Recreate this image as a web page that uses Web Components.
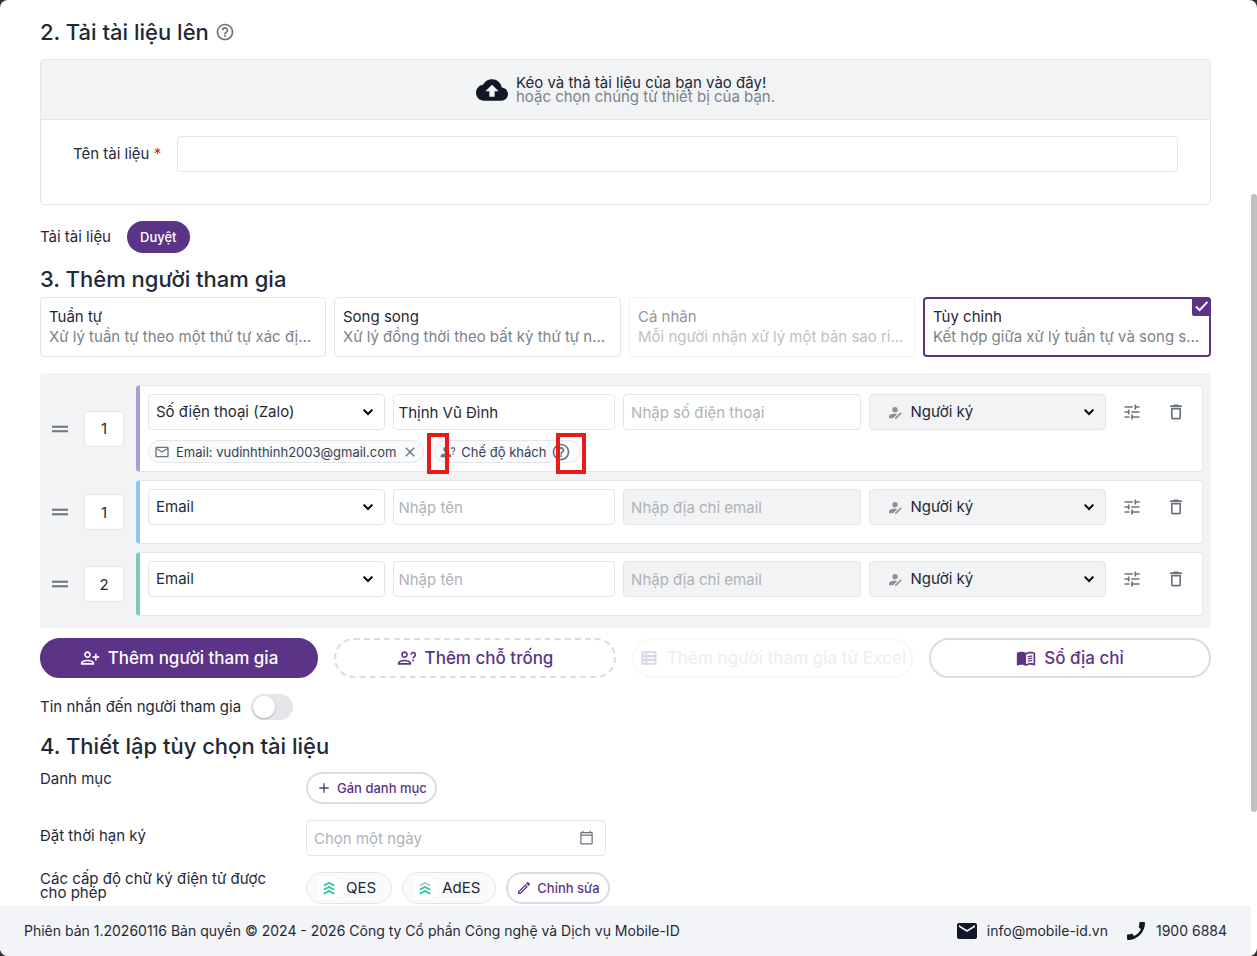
<!DOCTYPE html>
<html lang="vi">
<head>
<meta charset="utf-8">
<meta name="viewport" content="width=device-width, initial-scale=1">
<title>Mobile-ID</title>
<style>
:root {
    --ink: #1f2937;
    --muted: #7b828c;
    --icon: #6b7280;
    --line: #e3e5e8;
    --panel: #f2f3f5;
    --primary: #5b3488;
    --primary-line: #dfd9e7;
}
html { background: #333; }
body {
    margin: 0;
    color: var(--ink);
    font: 15px/20px Inter, "Noto Sans", sans-serif;
}
</style>
</head>
<body>

<app-frame>
    <section-title>2. Tải tài liệu lên <app-icon slot="icon" name="help" size="20"></app-icon></section-title>
    <upload-box></upload-box>
    <browse-row></browse-row>
    <section-title>3. Thêm người tham gia</section-title>
    <flow-picker></flow-picker>
    <participant-list>
        <participant-row order="1" color="#b09ad5" channel="Số điện thoại (Zalo)" name="Thịnh Vũ Đình" hint="Nhập số điện thoại">
            <info-chip icon="mailOutline" closable>Email: vudinhthinh2003@gmail.com</info-chip>
            <info-chip icon="personAsk" marked>Chế độ khách</info-chip>
        </participant-row>
        <participant-row order="1" color="#90c6f3" channel="Email" hint="Nhập địa chỉ email" locked></participant-row>
        <participant-row order="2" color="#80c8bd" channel="Email" hint="Nhập địa chỉ email" locked></participant-row>
    </participant-list>
    <action-bar>
        <pill-button look="solid" icon="personAdd">Thêm người tham gia</pill-button>
        <pill-button look="dashed" icon="personAskOutline">Thêm chỗ trống</pill-button>
        <pill-button icon="table" disabled>Thêm người tham gia từ Excel</pill-button>
        <pill-button icon="book">Sổ địa chỉ</pill-button>
    </action-bar>
    <message-toggle>Tin nhắn đến người tham gia</message-toggle>
    <section-title>4. Thiết lập tùy chọn tài liệu</section-title>
    <document-options></document-options>
    <app-footer slot="footer"></app-footer>
</app-frame>

<script>
class BaseElement extends HTMLElement {
    constructor() {
        super();
        this.attachShadow({ mode: 'open' });
    }

    connectedCallback() {
        this.shadowRoot.innerHTML = `
            <style>
            :host { display: block; box-sizing: border-box; }
            :host([hidden]) { display: none; }
            *, *::before, *::after { box-sizing: border-box; }
            button, input, select { font: inherit; color: inherit; margin: 0; }
            button { cursor: pointer; }
            input, select {
                width: 100%;
                min-width: 0;
                height: 36px;
                padding: 0 7px;
                border: 1px solid var(--line);
                border-radius: 4px;
                background: #fff;
                outline: none;
            }
            input::placeholder { color: #afb2b8; opacity: 1; }
            ${this.styles()}
            </style>
            ${this.markup()}
        `;
    }

    styles() {
        return '';
    }

    markup() {
        return '<slot></slot>';
    }
}

const PERSON_OUTLINE = '<path d="M13 8c0-2.21-1.79-4-4-4S5 5.79 5 8s1.79 4 4 4 4-1.79 4-4zm-2 0c0 1.1-.9 2-2 2s-2-.9-2-2 .9-2 2-2 2 .9 2 2zM1 18v2h16v-2c0-2.66-5.33-4-8-4s-8 1.34-8 4zm2 0c.2-.71 3.3-2 6-2 2.69 0 5.77 1.28 6 2H3z"/>';
const QUESTION_MARK = '<path d="M17 8a2.500 2.500 0 1 1 4 2c-1 .8-1.500 1.200-1.500 2.500" fill="none" stroke="currentColor" stroke-width="2"/><path d="M18.500 14h2v2h-2z"/>';

const ICONS = {
    help: '<path d="M11 18h2v-2h-2v2zm1-16C6.48 2 2 6.48 2 12s4.48 10 10 10 10-4.480 10-10S17.520 2 12 2zm0 18c-4.410 0-8-3.590-8-8s3.590-8 8-8 8 3.590 8 8-3.590 8-8 8zm0-14c-2.210 0-4 1.790-4 4h2c0-1.100.9-2 2-2s2 .9 2 2c0 2-3 1.750-3 5h2c0-2.250 3-2.500 3-5 0-2.210-1.790-4-4-4z"/>',
    cloud: '<path d="M19.35 10.04C18.67 6.59 15.64 4 12 4 9.11 4 6.6 5.64 5.35 8.04 2.34 8.36 0 10.91 0 14c0 3.31 2.69 6 6 6h13c2.76 0 5-2.24 5-5 0-2.64-2.05-4.78-4.65-4.96zM14 13v4h-4v-4H7l5-5 5 5h-3z"/>',
    check: '<path d="M3 12l6 6L21.500 4.500" fill="none" stroke="currentColor" stroke-width="3"/>',
    chevron: '<path d="M4.500 8l7.500 7.500L19.500 8" fill="none" stroke="currentColor" stroke-width="3.400"/>',
    handle: '<path d="M0 7h24v3H0zM0 14h24v3H0z"/>',
    mail: '<path d="M20 4H4c-1.1 0-1.99.9-1.99 2L2 18c0 1.1.9 2 2 2h16c1.1 0 2-.9 2-2V6c0-1.1-.9-2-2-2zm0 4l-8 5-8-5V6l8 5 8-5v2z"/>',
    mailOutline: '<path d="M22 6c0-1.1-.9-2-2-2H4c-1.1 0-2 .9-2 2v12c0 1.1.9 2 2 2h16c1.1 0 2-.9 2-2V6zm-2 0l-8 5-8-5h16zm0 12H4V8l8 5 8-5v10z"/>',
    close: '<path d="M19 6.41L17.59 5 12 10.59 6.41 5 5 6.41 10.59 12 5 17.59 6.41 19 12 13.41 17.59 19 19 17.59 13.41 12z"/>',
    tune: '<path d="M3 17v2h6v-2H3zM3 5v2h10V5H3zm10 16v-2h8v-2h-8v-2h-2v6h2zM7 9v2H3v2h4v2h2V9H7zm14 4v-2H11v2h10zm-6-4h2V7h4V5h-4V3h-2v6z"/>',
    trash: '<path d="M6 19c0 1.1.9 2 2 2h8c1.1 0 2-.9 2-2V7H6v12zM8 9h8v10H8V9zm7.5-5l-1-1h-5l-1 1H5v2h14V4z"/>',
    signer: '<circle cx="12" cy="7" r="4"/><path d="M3 20v-3c0-2.800 5-4 8-4 1.300 0 3 .2 4.200.7L9 20zM12 21v-1.800l8.500-8.500 1.800 1.800L13.800 21z"/>',
    personAdd: PERSON_OUTLINE + '<path d="M20 15v-3h3v-2h-3V7h-2v3h-3v2h3v3h2z"/>',
    personAskOutline: PERSON_OUTLINE + QUESTION_MARK,
    personAsk: '<circle cx="9" cy="8" r="4"/><path d="M1 20v-2c0-2.660 5.330-4 8-4s8 1.340 8 4v2z"/>' + QUESTION_MARK,
    table: '<path fill-rule="evenodd" d="M3 4h18v16H3zM5 6v2h3V6zm5 0v2h9V6zM5 11v2h3v-2zm5 0v2h9v-2zM5 16v2h3v-2zm5 0v2h9v-2z"/>',
    book: '<path d="M21 5c-1.11-.35-2.33-.5-3.5-.5-1.95 0-4.05.4-5.5 1.5-1.45-1.1-3.55-1.5-5.5-1.5S2.45 4.9 1 6v14.65c0 .25.25.5.5.5.1 0 .15-.05.25-.05C3.1 20.45 5.05 20 6.5 20c1.95 0 4.05.4 5.5 1.5 1.35-.85 3.8-1.5 5.5-1.5 1.65 0 3.35.3 4.75 1.05.1.05.15.05.25.05.25 0 .5-.25.5-.5V6c-.6-.45-1.25-.75-2-1zm0 13.5c-1.1-.35-2.3-.5-3.5-.5-1.7 0-4.15.65-5.5 1.5V8c1.35-.85 3.8-1.5 5.5-1.5 1.2 0 2.4.15 3.5.5v11.5z"/><path d="M14 10.500q3-1.200 5.500-.7M14 13.200q3-1.200 5.500-.7M14 15.900q3-1.200 5.500-.7" fill="none" stroke="currentColor" stroke-width="1.400"/>',
    plus: '<path d="M19 13h-6v6h-2v-6H5v-2h6V5h2v6h6v2z"/>',
    calendar: '<path d="M20 3h-1V1h-2v2H7V1H5v2H4c-1.1 0-2 .9-2 2v16c0 1.1.9 2 2 2h16c1.1 0 2-.9 2-2V5c0-1.1-.9-2-2-2zm0 18H4V9h16v12zm0-14H4V5h16v2z"/>',
    levels: '<g fill="none" stroke="currentColor" stroke-width="3.200"><path d="M3 8l9-5 9 5" stroke="var(--level-top, currentColor)"/><path d="M3 15l9-5 9 5M3 22l9-5 9 5"/></g>',
    edit: '<path d="M14.06 9.02l.92.92L5.92 19H5v-.92l9.06-9.06M17.66 3c-.25 0-.51.1-.7.29l-1.83 1.83 3.75 3.75 1.83-1.83c.39-.39.39-1.02 0-1.41l-2.34-2.34c-.2-.2-.45-.29-.71-.29zm-3.6 3.19L3 17.25V21h3.75L17.81 9.94l-3.75-3.75z"/>',
    phone: '<path transform="matrix(-1 0 0 1 24 0)" d="M20.01 15.38c-1.23 0-2.42-.2-3.53-.56-.35-.12-.74-.03-1.01.24l-1.57 1.97c-2.83-1.35-5.48-3.9-6.89-6.83l1.95-1.66c.27-.28.35-.67.24-1.02-.37-1.11-.56-2.3-.56-3.53 0-.54-.45-.99-.99-.99H4.19C3.65 3 3 3.24 3 3.99 3 13.28 10.73 21 20.01 21c.71 0 .99-.63.99-1.18v-3.45c0-.54-.45-.99-.99-.99z"/>'
};

class AppIcon extends BaseElement {
    get name() {
        return this.getAttribute('name');
    }
    get size() {
        return this.getAttribute('size') || 24;
    }
    styles() {
        return `
            :host { display: inline-flex; flex: none; }
            svg { display: block; fill: currentColor; }
        `;
    }
    markup() {
        return `<svg width="${this.size}" height="${this.size}" viewBox="0 0 24 24" aria-hidden="true">${ICONS[this.name] || ''}</svg>`;
    }
}

class AppFrame extends BaseElement {
    styles() {
        return `
            :host {
                display: grid;
                grid-template: minmax(0, 1fr) auto / minmax(0, 1fr) 6px;
                height: 100vh;
                background: #fff;
                border-radius: 8px;
                overflow: hidden;
            }
            main { padding: 18px 40px 0; overflow: hidden; }
            .track { grid-column: 2; grid-row: 1 / 3; display: flex; flex-direction: column; }
            .before { flex: 194; }
            .thumb { flex: 618; background: #c1c1c1; border-radius: 3px; }
            .after { flex: 144; }
        `;
    }
    markup() {
        return `
            <main><slot></slot></main>
            <div class="track"><div class="before"></div><div class="thumb"></div><div class="after"></div></div>
            <slot name="footer"></slot>
        `;
    }
}

class SectionTitle extends BaseElement {
    styles() {
        return `
            :host { margin-top: 12px; }
            :host(:first-child) { margin-top: 0; }
            h2 { display: flex; align-items: center; gap: 6px; margin: 0; font-size: 22px; font-weight: 500; line-height: 28px; }
            ::slotted(app-icon) { color: var(--icon); }
        `;
    }
    markup() {
        return '<h2><span><slot></slot></span><slot name="icon"></slot></h2>';
    }
}

class UploadBox extends BaseElement {
    styles() {
        return `
            :host { margin-top: 13px; border: 1px solid var(--line); border-radius: 4px; overflow: hidden; }
            .drop {
                display: flex;
                align-items: center;
                justify-content: center;
                gap: 8px;
                height: 60px;
                background: var(--panel);
                border-bottom: 1px solid var(--line);
                line-height: 14px;
            }
            .drop app-icon { color: #111827; }
            .drop p { margin: 0; }
            .drop .sub { color: var(--muted); }
            .field { display: flex; align-items: center; gap: 16px; padding: 16px 32px 32px; }
            label { flex: none; }
            b { color: #c81e1e; font-weight: 400; }
        `;
    }
    markup() {
        return `
            <div class="drop">
                <app-icon name="cloud" size="32"></app-icon>
                <div>
                    <p>Kéo và thả tài liệu của bạn vào đây!</p>
                    <p class="sub">hoặc chọn chúng từ thiết bị của bạn.</p>
                </div>
            </div>
            <div class="field">
                <label for="title">Tên tài liệu <b>*</b></label>
                <input id="title" type="text">
            </div>
        `;
    }
}

class BrowseRow extends BaseElement {
    styles() {
        return `
            :host { display: flex; align-items: center; gap: 16px; margin-top: 16px; }
            button {
                height: 32px;
                padding: 0 13px;
                border: 0;
                border-radius: 16px;
                background: var(--primary);
                color: #fff;
                font-size: 13px;
                font-weight: 500;
            }
        `;
    }
    markup() {
        return '<span>Tải tài liệu</span><button type="button">Duyệt</button>';
    }
}

const FLOWS = [
    { title: 'Tuần tự', text: 'Xử lý tuần tự theo một thứ tự xác định trước' },
    { title: 'Song song', text: 'Xử lý đồng thời theo bất kỳ thứ tự nào được chọn' },
    { title: 'Cá nhân', text: 'Mỗi người nhận xử lý một bản sao riêng của tài liệu', disabled: true },
    { title: 'Tùy chỉnh', text: 'Kết hợp giữa xử lý tuần tự và song song tài liệu', checked: true }
];

class FlowPicker extends BaseElement {
    styles() {
        return `
            :host { display: grid; grid-template-columns: 286fr 287fr 286fr 288fr; gap: 8px; margin-top: 4px; }
            label {
                position: relative;
                display: block;
                min-width: 0;
                height: 60px;
                padding: 9px 8px;
                border: 1px solid var(--line);
                border-radius: 4px;
                cursor: pointer;
            }
            input { position: absolute; width: 1px; height: 1px; padding: 0; opacity: 0; }
            strong, span { display: block; white-space: nowrap; overflow: hidden; text-overflow: ellipsis; }
            strong { font-weight: 400; }
            span { color: var(--muted); }
            .disabled { opacity: .5; }
            .checked { padding: 8px; border: 2px solid var(--primary); }
            .checked app-icon { position: absolute; top: -2px; right: -2px; padding: 2px; background: var(--primary); color: #fff; border-radius: 0 4px 0 2px; }
        `;
    }
    markup() {
        return FLOWS.map(flow => `
            <label class="${flow.disabled ? 'disabled' : ''} ${flow.checked ? 'checked' : ''}">
                <input type="radio" name="flow" ${flow.disabled ? 'disabled' : ''} ${flow.checked ? 'checked' : ''}>
                <strong>${flow.title}</strong>
                <span>${flow.text}</span>
                ${flow.checked ? '<app-icon name="check" size="15"></app-icon>' : ''}
            </label>
        `).join('');
    }
}

class ParticipantList extends BaseElement {
    styles() {
        return `
            :host {
                display: flex;
                flex-direction: column;
                gap: 8px;
                margin-top: 16px;
                padding: 12px 8px 12px 12px;
                background: var(--panel);
                border-radius: 4px;
            }
        `;
    }
}

class ParticipantRow extends BaseElement {
    styles() {
        return `
            :host { display: grid; grid-template-columns: 16px 40px minmax(0, 1fr); align-items: center; }
            .handle { color: var(--icon); }
            .order { margin-left: 16px; width: 40px; padding: 0; text-align: center; }
            .card {
                margin-left: 28px;
                padding: 8px;
                background: #fff;
                border: 1px solid var(--line);
                border-left: 4px solid ${this.getAttribute('color')};
                border-radius: 4px;
            }
            .fields { display: grid; grid-template-columns: 15fr 14fr 15fr 15fr 80px; gap: 8px; }
            .pick { position: relative; }
            .pick app-icon { position: absolute; top: 11px; right: 10px; pointer-events: none; color: #000; }
            .pick .lead { left: 18px; right: auto; color: #8d9096; }
            select { appearance: none; }
            .name { padding: 0 4px; }
            .role select { padding-left: 41px; }
            .role select, .locked { background: var(--panel); }
            .actions { display: flex; gap: 8px; }
            .actions button {
                display: flex;
                align-items: center;
                justify-content: center;
                width: 36px;
                height: 36px;
                padding: 0;
                border: 0;
                background: none;
                color: var(--icon);
            }
            .chips { display: flex; gap: 10px; padding-top: 10px; }
        `;
    }
    markup() {
        const channel = this.getAttribute('channel');
        const hint = this.getAttribute('hint');
        const locked = this.hasAttribute('locked');
        return `
            <app-icon class="handle" name="handle" size="16"></app-icon>
            <input class="order" type="text" inputmode="numeric" aria-label="Thứ tự" value="${this.getAttribute('order')}">
            <div class="card">
                <div class="fields">
                    <div class="pick">
                        <select aria-label="Phương thức"><option>${channel}</option></select>
                        <app-icon name="chevron" size="14"></app-icon>
                    </div>
                    <input class="name" type="text" aria-label="Tên" placeholder="Nhập tên" value="${this.getAttribute('name') || ''}">
                    <input class="${locked ? 'locked' : ''}" type="text" aria-label="${hint}" placeholder="${hint}">
                    <div class="pick role">
                        <app-icon class="lead" name="signer" size="16"></app-icon>
                        <select aria-label="Vai trò"><option>Người ký</option></select>
                        <app-icon name="chevron" size="14"></app-icon>
                    </div>
                    <div class="actions">
                        <button type="button" aria-label="Cài đặt"><app-icon name="tune" size="20"></app-icon></button>
                        <button type="button" aria-label="Xóa"><app-icon name="trash" size="20"></app-icon></button>
                    </div>
                </div>
                <div class="chips"><slot></slot></div>
            </div>
        `;
    }
}

class InfoChip extends BaseElement {
    styles() {
        return `
            :host {
                position: relative;
                display: flex;
                align-items: center;
                gap: 6px;
                height: 23px;
                padding: 0 5px;
                border: 1px solid var(--line);
                border-radius: 12px;
                background: #f9fafb;
                color: #374151;
                font-size: 13px;
            }
            :host([marked]) { min-width: 147px; gap: 5px; }
            app-icon { color: var(--icon); }
            button { display: flex; padding: 0; border: 0; background: none; }
            .mark { position: absolute; top: -8px; height: 41px; border: 4px solid #e81b1b; }
            .mark.start { left: -8px; width: 22px; }
            .mark.end { right: -6px; width: 30px; }
        `;
    }
    markup() {
        return `
            <app-icon name="${this.getAttribute('icon')}" size="16"></app-icon>
            <span><slot></slot></span>
            ${this.hasAttribute('closable') ? '<button type="button" aria-label="Xóa"><app-icon name="close" size="16"></app-icon></button>' : ''}
            ${this.hasAttribute('marked') ? '<app-icon name="help" size="20"></app-icon><i class="mark start"></i><i class="mark end"></i>' : ''}
        `;
    }
}

class ActionBar extends BaseElement {
    styles() {
        return ':host { display: grid; grid-template-columns: 278fr 282fr 281fr 282fr; gap: 16px; margin-top: 10px; }';
    }
}

class PillButton extends BaseElement {
    styles() {
        return `
            button {
                display: flex;
                align-items: center;
                justify-content: center;
                gap: 8px;
                width: 100%;
                height: 40px;
                padding: 0;
                border: 2px solid var(--primary-line);
                border-radius: 20px;
                background: #fff;
                color: var(--primary);
                font-size: 17px;
                font-weight: 500;
                white-space: nowrap;
            }
            :host([look=solid]) button { background: var(--primary); border-color: var(--primary); color: #fff; }
            :host([look=dashed]) button { border-style: dashed; }
            :host([size=small]) button { height: 32px; padding: 0 8px; gap: 5px; font-size: 13px; }
            :host([disabled]) button { border-color: #f8f8f9; color: #efeff1; }
            :host([disabled]) app-icon { color: #ddd4e8; }
        `;
    }
    markup() {
        const size = this.getAttribute('size') === 'small' ? 16 : 20;
        return `
            <button type="button" ${this.hasAttribute('disabled') ? 'disabled' : ''}>
                <app-icon name="${this.getAttribute('icon')}" size="${size}"></app-icon>
                <span><slot></slot></span>
            </button>
        `;
    }
}

class MessageToggle extends BaseElement {
    styles() {
        return `
            :host { margin-top: 16px; }
            label { display: inline-flex; align-items: center; gap: 10px; }
            input {
                appearance: none;
                display: flex;
                align-items: center;
                width: 42px;
                height: 26px;
                padding: 0 2px;
                border: 0;
                border-radius: 13px;
                background: #e5e6ea;
            }
            input::before {
                content: "";
                width: 22px;
                height: 22px;
                border-radius: 50%;
                background: #fff;
                box-shadow: 0 1px 2px rgba(0, 0, 0, .25);
            }
            input:checked { justify-content: flex-end; background: var(--primary); }
        `;
    }
    markup() {
        return '<label><span><slot></slot></span><input type="checkbox" role="switch"></label>';
    }
}

class LevelTag extends BaseElement {
    styles() {
        return `
            :host {
                display: flex;
                align-items: center;
                gap: 5px;
                height: 32px;
                padding: 0 15px 0 10px;
                border: 1px solid var(--line);
                border-radius: 16px;
                background: #f9fafb;
            }
            :host([advanced]) { --level-top: #b5c5c6; }
            i { display: flex; padding: 5px; border-radius: 50%; background: #fff; color: #3ec6a4; }
        `;
    }
    markup() {
        return '<i><app-icon name="levels" size="14"></app-icon></i><span><slot></slot></span>';
    }
}

class DocumentOptions extends BaseElement {
    styles() {
        return `
            :host { display: grid; grid-template-columns: 250px minmax(0, 1fr); gap: 16px; margin-top: 12px; }
            .label { line-height: 14px; }
            .middle { padding-top: 9px; }
            .line { display: flex; align-items: center; gap: 10px; }
            .date { position: relative; width: 300px; }
            .date button { position: absolute; top: 10px; right: 12px; display: flex; padding: 0; border: 0; background: none; color: var(--icon); }
        `;
    }
    markup() {
        return `
            <div class="label">Danh mục</div>
            <div class="line"><pill-button size="small" icon="plus">Gán danh mục</pill-button></div>
            <label class="label middle" for="deadline">Đặt thời hạn ký</label>
            <div class="date">
                <input id="deadline" type="text" placeholder="Chọn một ngày">
                <button type="button" aria-label="Lịch"><app-icon name="calendar" size="15"></app-icon></button>
            </div>
            <div class="label">Các cấp độ chữ ký điện tử được cho phép</div>
            <div class="line">
                <level-tag>QES</level-tag>
                <level-tag advanced>AdES</level-tag>
                <pill-button size="small" icon="edit">Chỉnh sửa</pill-button>
            </div>
        `;
    }
}

class AppFooter extends BaseElement {
    styles() {
        return `
            :host { display: flex; align-items: center; justify-content: space-between; height: 50px; padding: 0 24px; background: #f3f4f8; font-size: 14px; }
            nav { display: flex; gap: 16px; }
            a { display: flex; align-items: center; gap: 8px; color: inherit; text-decoration: none; }
            app-icon { color: #111827; }
        `;
    }
    markup() {
        return `
            <span>Phiên bản 1.20260116 Bản quyền © 2024 - 2026 Công ty Cổ phần Công nghệ và Dịch vụ Mobile-ID</span>
            <nav>
                <a href="mailto:info@mobile-id.vn"><app-icon name="mail"></app-icon>info@mobile-id.vn</a>
                <a href="tel:19006884"><app-icon name="phone"></app-icon>1900 6884</a>
            </nav>
        `;
    }
}

customElements.define('app-icon', AppIcon);
customElements.define('app-frame', AppFrame);
customElements.define('section-title', SectionTitle);
customElements.define('upload-box', UploadBox);
customElements.define('browse-row', BrowseRow);
customElements.define('flow-picker', FlowPicker);
customElements.define('participant-list', ParticipantList);
customElements.define('participant-row', ParticipantRow);
customElements.define('info-chip', InfoChip);
customElements.define('action-bar', ActionBar);
customElements.define('pill-button', PillButton);
customElements.define('message-toggle', MessageToggle);
customElements.define('level-tag', LevelTag);
customElements.define('document-options', DocumentOptions);
customElements.define('app-footer', AppFooter);
</script>
</body>
</html>
